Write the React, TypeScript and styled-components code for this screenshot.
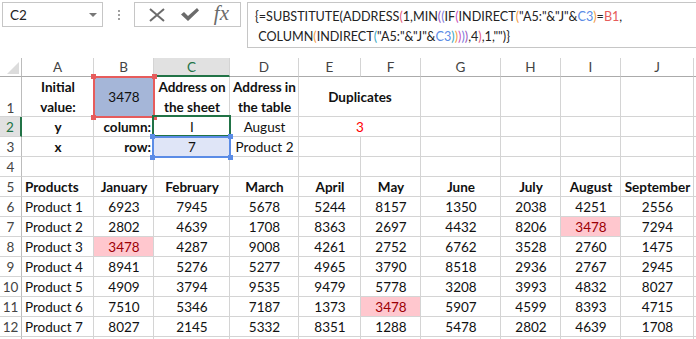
import React from "react";
import styled, { createGlobalStyle } from "styled-components";

const GlobalStyle = createGlobalStyle`
  html, body { margin: 0; padding: 0; background: #ffffff; }
  body { font-family: "Lato", "Liberation Sans", sans-serif; overflow: hidden; }
`;

const FONT = `"Lato", "Liberation Sans", sans-serif`;
const GRID = "#d4d4d4";

const Page = styled.div`
  width: 696px;
  height: 339px;
  overflow: hidden;
  background: #fff;
`;

/* ---------- formula bar ---------- */
const FormulaBar = styled.div`
  display: flex;
  align-items: flex-start;
  height: 58px;
  padding: 2px 0 0 2px;
  box-sizing: border-box;
`;

const NameBox = styled.div`
  width: 101px;
  height: 25px;
  box-sizing: border-box;
  border: 1px solid #c6c6c6;
  display: flex;
  align-items: center;
  justify-content: space-between;
  padding: 0 5px 0 7px;
  font-family: ${FONT};
  font-size: 13.5px;
  color: #222;
`;

const DropArrow = styled.span`
  width: 0;
  height: 0;
  border-left: 4px solid transparent;
  border-right: 4px solid transparent;
  border-top: 4px solid #777;
`;

const Dots = styled.div`
  width: 31px;
  height: 25px;
  display: flex;
  flex-direction: column;
  align-items: center;
  justify-content: center;
  gap: 2px;
`;

const Dot = styled.span`
  width: 2px;
  height: 2px;
  background: #a0a0a0;
`;

const IconBox = styled.div`
  width: 107px;
  height: 25px;
  box-sizing: border-box;
  border: 1px solid #c6c6c6;
  display: flex;
  align-items: center;
  justify-content: space-around;
  padding: 0 4px 0 6px;
  margin-right: 6px;
`;

const Fx = styled.span`
  font-family: "Liberation Serif", "DejaVu Serif", serif;
  font-style: italic;
  font-size: 21px;
  color: #6b6b6b;
  line-height: 1;
  margin-top: -3px;
`;

const FormulaBox = styled.div`
  flex: 1;
  height: 46px;
  box-sizing: border-box;
  border: 1px solid #c6c6c6;
  border-right: none;
  padding: 4px 0 0 7px;
  font-family: ${FONT};
  font-size: 12.6px;
  line-height: 20px;
  color: #222;
  white-space: pre;
`;

const Tok = styled.span<{ $c: string }>`
  color: ${(p) => p.$c};
`;

/* ---------- sheet ---------- */
const Sheet = styled.div`
  display: grid;
  grid-template-columns: 22px 72px 60px 76px 69px 62px 60px 80px 60px 60px 73px 1fr;
  grid-template-rows: 19px 40px repeat(12, 20px);
  font-family: ${FONT};
  font-size: 13.5px;
  color: #111;
`;

const Corner = styled.div`
  border-right: 1px solid #bcbcbc;
  border-bottom: 1px solid #ababab;
  display: flex;
  align-items: flex-end;
  justify-content: flex-end;
  padding: 0 2px 2px 0;
`;

const ColHead = styled.div<{ $active?: boolean }>`
  position: relative;
  display: flex;
  align-items: center;
  justify-content: center;
  color: ${(p) => (p.$active ? "#217346" : "#444")};
  background: ${(p) => (p.$active ? "#e1e1e1" : "#fff")};
  border-right: 1px solid ${GRID};
  border-bottom: ${(p) => (p.$active ? "2px solid #217346" : "1px solid #ababab")};
  font-size: 13.5px;
`;

const RowHead = styled.div<{ $active?: boolean; $top?: boolean }>`
  display: flex;
  align-items: ${(p) => (p.$top ? "flex-end" : "center")};
  justify-content: center;
  color: ${(p) => (p.$active ? "#217346" : "#444")};
  background: ${(p) => (p.$active ? "#e1e1e1" : "#fff")};
  border-right: ${(p) => (p.$active ? "2px solid #217346" : "1px solid #bcbcbc")};
  border-bottom: 1px solid ${GRID};
  padding-top: 1px;
  box-sizing: border-box;
  font-size: 13.5px;
`;

type CellProps = {
  $align?: "left" | "center" | "right";
  $bold?: boolean;
  $fill?: string;
  $color?: string;
  $span?: number;
  $wrap?: boolean;
};

const Cell = styled.div<CellProps>`
  position: relative;
  display: flex;
  align-items: center;
  justify-content: ${(p) =>
    p.$align === "left" ? "flex-start" : p.$align === "right" ? "flex-end" : "center"};
  text-align: ${(p) => p.$align ?? "center"};
  grid-column: ${(p) => (p.$span ? `span ${p.$span}` : "auto")};
  font-weight: ${(p) => (p.$bold ? 700 : 400)};
  background: ${(p) => p.$fill ?? "transparent"};
  color: ${(p) => p.$color ?? "#111"};
  border-right: 1px solid ${GRID};
  border-bottom: 1px solid ${GRID};
  padding: 1px 2px 0 3px;
  line-height: ${(p) => (p.$wrap ? "20px" : "19px")};
  white-space: ${(p) => (p.$wrap ? "normal" : "nowrap")};
  box-sizing: border-box;
  overflow: visible;
`;

const Frame = styled.div<{ $color: string; $inset: string }>`
  position: absolute;
  inset: ${(p) => p.$inset};
  border: 2px solid ${(p) => p.$color};
  z-index: 5;
  pointer-events: none;
`;

const Handle = styled.span<{ $color: string; $pos: "tl" | "tr" | "bl" | "br" }>`
  position: absolute;
  width: 5px;
  height: 5px;
  background: ${(p) => p.$color};
  ${(p) => (p.$pos[0] === "t" ? "top: -4px;" : "bottom: -4px;")}
  ${(p) => (p.$pos[1] === "l" ? "left: -4px;" : "right: -4px;")}
`;

const RangeFrame: React.FC<{ color: string; inset: string; handles?: boolean }> = ({
  color,
  inset,
  handles,
}) => (
  <Frame $color={color} $inset={inset}>
    {handles &&
      (["tl", "tr", "bl", "br"] as const).map((p) => <Handle key={p} $color={color} $pos={p} />)}
  </Frame>
);

const PINK_FILL = "#ffc7ce";
const PINK_TEXT = "#9c0006";

const months = [
  "January",
  "February",
  "March",
  "April",
  "May",
  "June",
  "July",
  "August",
  "September",
];

const data: number[][] = [
  [6923, 7945, 5678, 5244, 8157, 1350, 2038, 4251, 2556],
  [2802, 4639, 1708, 8363, 2697, 4432, 8206, 3478, 7294],
  [3478, 4287, 9008, 4261, 2752, 6762, 3528, 2760, 1475],
  [8941, 5276, 5277, 4965, 3790, 8518, 2936, 2767, 2945],
  [4909, 3794, 9535, 9479, 5778, 3208, 3993, 4832, 8027],
  [7510, 5346, 7187, 1373, 3478, 5907, 4599, 8393, 4715],
  [8027, 2145, 5332, 8351, 1288, 5478, 2802, 4639, 1708],
];

const K = "#222";
const P1 = "#e5607f";
const P2 = "#9b55c0";
const P3 = "#7d7ddd";
const P4 = "#c852c2";
const P5 = "#f29a45";
const P6 = "#3aa7c4";
const REF_C3 = "#5b8ce6";
const REF_B1 = "#e65c5c";

const line1: [string, string][] = [
  ["{=SUBSTITUTE(ADDRESS", K],
  ["(", P1],
  ["1,MIN", K],
  ["(", P2],
  ["(", P3],
  ["IF", K],
  ["(", P4],
  ["INDIRECT", K],
  ["(", P5],
  ['"A5:"&"J"&', K],
  ["C3", REF_C3],
  [")", P5],
  ["=", K],
  ["B1", REF_B1],
  [",", K],
];

const line2: [string, string][] = [
  [" COLUMN", K],
  ["(", P5],
  ["INDIRECT", K],
  ["(", P6],
  ['"A5:"&"J"&', K],
  ["C3", REF_C3],
  [")", P6],
  [")", P5],
  [")", P4],
  [")", P3],
  [")", P2],
  [",4", K],
  [")", P1],
  [',1,"")}', K],
];

const colLetters = ["A", "B", "C", "D", "E", "F", "G", "H", "I", "J", ""];

export default function App() {
  const isDup = (r: number, c: number) => data[r][c] === 3478;
  return (
    <Page>
      <GlobalStyle />
      <FormulaBar>
        <NameBox>
          <span>C2</span>
          <DropArrow />
        </NameBox>
        <Dots>
          <Dot />
          <Dot />
          <Dot />
        </Dots>
        <IconBox>
          <svg width="18" height="14" viewBox="0 0 18 14">
            <path d="M2 1 L16 13 M16 1 L2 13" stroke="#6b6b6b" strokeWidth="2" fill="none" />
          </svg>
          <svg width="20" height="15" viewBox="0 0 20 15">
            <path d="M1 7.5 L4 5 L8 9 L17 1 L19 3.5 L8 14 Z" fill="#6b6b6b" />
          </svg>
          <Fx>fx</Fx>
        </IconBox>
        <FormulaBox>
          {line1.map(([t, c], i) => (
            <Tok key={i} $c={c}>
              {t}
            </Tok>
          ))}
          {"\n"}
          {line2.map(([t, c], i) => (
            <Tok key={i} $c={c}>
              {t}
            </Tok>
          ))}
        </FormulaBox>
      </FormulaBar>

      <Sheet>
        {/* header row */}
        <Corner>
          <svg width="12" height="12" viewBox="0 0 12 12">
            <polygon points="12,0 12,12 0,12" fill="#dcdcdc" />
          </svg>
        </Corner>
        {colLetters.map((l, i) => (
          <ColHead key={i} $active={l === "C"}>
            {l}
          </ColHead>
        ))}

        {/* row 1 */}
        <RowHead $top>1</RowHead>
        <Cell $bold $wrap>
          Initial value:
        </Cell>
        <Cell $fill="#a5b6d8">
          3478
          <RangeFrame color={REF_B1} inset="-1px -2px -2px -1px" handles />
        </Cell>
        <Cell $bold $wrap>
          Address on the sheet
        </Cell>
        <Cell $bold $wrap>
          Address in the table
        </Cell>
        <Cell $bold $span={2}>
          Duplicates
        </Cell>
        <Cell />
        <Cell />
        <Cell />
        <Cell />
        <Cell />

        {/* row 2 */}
        <RowHead $active>2</RowHead>
        <Cell $bold>y</Cell>
        <Cell $bold $align="right">
          column:
        </Cell>
        <Cell>
          I
          <RangeFrame color="#217346" inset="-2px -2px -1px -2px" />
        </Cell>
        <Cell>August</Cell>
        <Cell $span={2} $color="#ff0000">
          3
        </Cell>
        <Cell />
        <Cell />
        <Cell />
        <Cell />
        <Cell />

        {/* row 3 */}
        <RowHead>3</RowHead>
        <Cell $bold>x</Cell>
        <Cell $bold $align="right">
          row:
        </Cell>
        <Cell $fill="#dfe5f7">
          7
          <RangeFrame color={REF_C3} inset="-1px -2px -2px -2px" handles />
        </Cell>
        <Cell>Product 2</Cell>
        {Array.from({ length: 7 }).map((_, i) => (
          <Cell key={i} />
        ))}

        {/* row 4 */}
        <RowHead>4</RowHead>
        {Array.from({ length: 11 }).map((_, i) => (
          <Cell key={i} />
        ))}

        {/* row 5 */}
        <RowHead>5</RowHead>
        <Cell $bold $align="left">
          Products
        </Cell>
        {months.map((m) => (
          <Cell key={m} $bold>
            {m}
          </Cell>
        ))}
        <Cell />

        {data.map((row, r) => (
          <React.Fragment key={r}>
            <RowHead>{r + 6}</RowHead>
            <Cell $align="left">Product {r + 1}</Cell>
            {row.map((v, c) => (
              <Cell
                key={c}
                $fill={isDup(r, c) ? PINK_FILL : undefined}
                $color={isDup(r, c) ? PINK_TEXT : undefined}
              >
                {v}
              </Cell>
            ))}
            <Cell />
          </React.Fragment>
        ))}

        <RowHead />
        {Array.from({ length: 11 }).map((_, i) => (
          <Cell key={i} />
        ))}
      </Sheet>
    </Page>
  );
}
